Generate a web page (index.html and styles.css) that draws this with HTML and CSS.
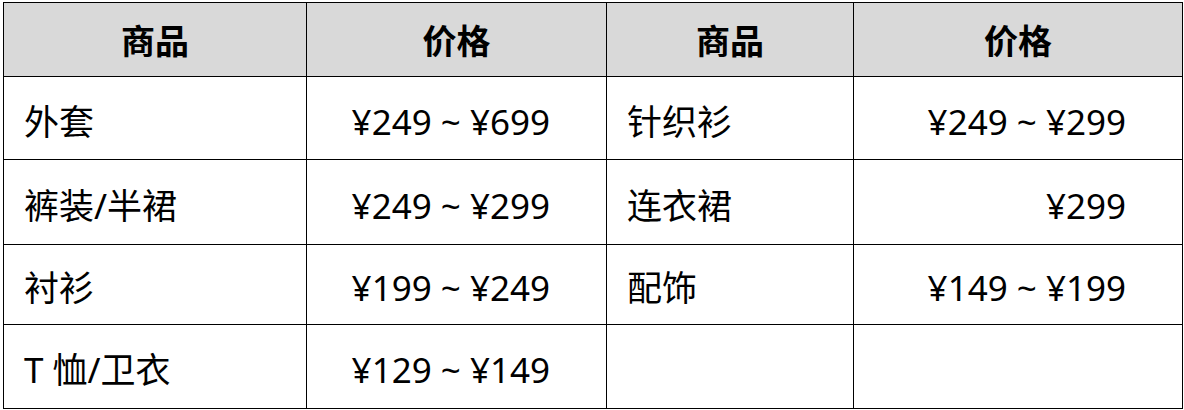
FILE: index.html
```html
<!DOCTYPE html>
<html lang="zh">
<head>
<meta charset="utf-8">
<title>价格表</title>
<link rel="stylesheet" href="styles.css">
</head>
<body>
<table class="price-table">
  <colgroup>
    <col class="c1"><col class="c2"><col class="c3"><col class="c4">
  </colgroup>
  <thead>
    <tr class="r-head">
      <th>商品</th><th>价格</th><th>商品</th><th>价格</th>
    </tr>
  </thead>
  <tbody>
    <tr class="r1">
      <td class="name">外套</td><td class="price">¥249 ~ ¥699</td>
      <td class="name">针织衫</td><td class="price">¥249 ~ ¥299</td>
    </tr>
    <tr class="r2">
      <td class="name">裤装/半裙</td><td class="price">¥249 ~ ¥299</td>
      <td class="name">连衣裙</td><td class="price">¥299</td>
    </tr>
    <tr class="r3">
      <td class="name">衬衫</td><td class="price">¥199 ~ ¥249</td>
      <td class="name">配饰</td><td class="price">¥149 ~ ¥199</td>
    </tr>
    <tr class="r4">
      <td class="name">T 恤/卫衣</td><td class="price">¥129 ~ ¥149</td>
      <td class="name"></td><td class="price"></td>
    </tr>
  </tbody>
</table>
</body>
</html>
```

FILE: styles.css
```css
html, body {
  margin: 0;
  padding: 0;
  background: #ffffff;
}

body {
  padding: 2px 0 0 3px;
  font-family: "Noto Sans", "Noto Sans CJK SC", sans-serif;
  color: #000;
}

.price-table {
  border-collapse: collapse;
  table-layout: fixed;
  width: 1179px;
  font-size: 35px;
}

.c1 { width: 303px; }
.c2 { width: 300px; }
.c3 { width: 247px; }
.c4 { width: 329px; }

.price-table th,
.price-table td {
  border: 1px solid #000;
  padding: 0;
  line-height: 1;
  white-space: nowrap;
  vertical-align: middle;
}

.price-table th {
  background: #d9d9d9;
  font-weight: bold;
  text-align: center;
  font-family: "Noto Sans CJK SC", sans-serif;
  font-size: 34px;
}

.r-head th { height: 73px; }
.r1 td { height: 76px; }
.r2 td { height: 78px; }
.r3 td { height: 73px; }
.r4 td { height: 77px; }

.price-table .name {
  padding: 6px 0 0 20px;
  text-align: left;
}

.price-table .price {
  padding: 6px 56px 0 0;
  text-align: right;
}
```
